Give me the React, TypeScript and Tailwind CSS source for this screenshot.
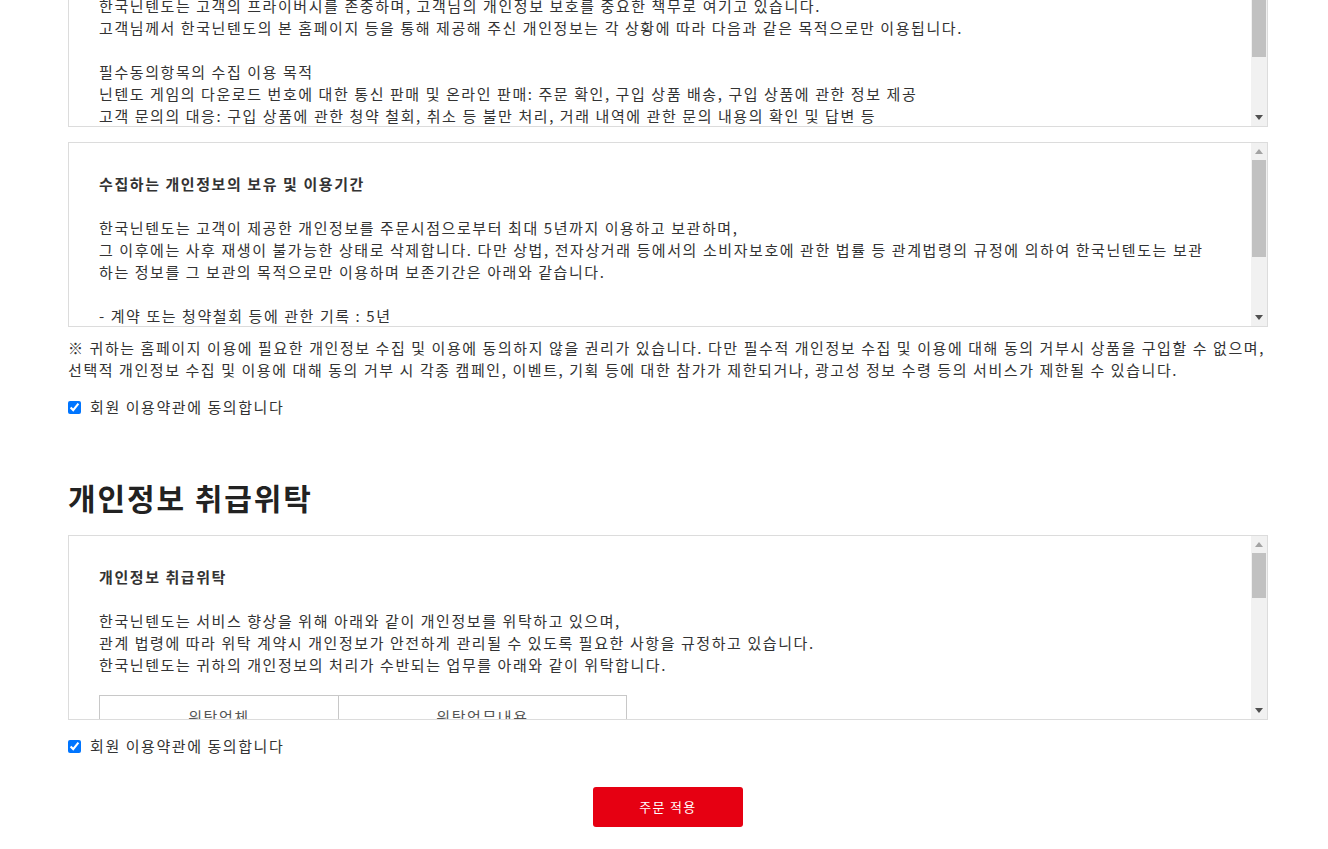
import React from "react";

const font = {
  fontFamily: '"Noto Sans CJK KR", "Noto Sans", sans-serif',
};

// fake classic scrollbar, since the box is a fixed-height scroll area
function ScrollRail({ thumb }: { thumb: number }) {
  return (
    <div className="flex w-[16px] shrink-0 flex-col bg-[#f1f1f1]">
      <div className="flex h-[17px] items-center justify-center">
        <svg width="8" height="5" viewBox="0 0 8 5">
          <path d="M4 0 L8 5 L0 5 Z" fill="#a3a3a3" />
        </svg>
      </div>
      <div className="flex-1 px-[1px]">
        <div className="w-full bg-[#c1c1c1]" style={{ height: thumb }} />
      </div>
      <div className="flex h-[17px] items-center justify-center">
        <svg width="8" height="5" viewBox="0 0 8 5">
          <path d="M0 0 L8 0 L4 5 Z" fill="#505050" />
        </svg>
      </div>
    </div>
  );
}

function TermsBox({ children, thumb }: { children: React.ReactNode; thumb: number }) {
  return (
    <div className="flex h-[185px] border border-[#dcdcdc] bg-white">
      <div className="flex-1 overflow-hidden pl-[30px] pr-[30px] pt-[30px] text-[15px] leading-[22px] tracking-[0.105em] text-[#333]">
        {children}
      </div>
      <ScrollRail thumb={thumb} />
    </div>
  );
}

function AgreeCheck() {
  return (
    <label className="flex items-center text-[15px] leading-[22px] tracking-[0.105em] text-[#333]">
      <input type="checkbox" defaultChecked className="m-0 mr-[9px] h-[13px] w-[13px]" />
      회원 이용약관에 동의합니다
    </label>
  );
}

const consignees = [
  ["(주)KG이니시스", "신용카드 결제 및 결제 대행 서비스"],
  ["(주)토스페이먼츠", "전자결제 대행 서비스"],
  ["CJ대한통운(주)", "구입 상품의 배송"],
  ["(주)트랜스코스모스코리아", "고객 상담 및 문의 응대"],
  ["(주)카카오", "알림톡 발송"],
];

export default function App() {
  return (
    <div className="min-h-screen overflow-hidden bg-white" style={font}>
      <div className="ml-[68px] w-[1200px] pb-[40px]">
        <div className="-mt-[58px]">
          <TermsBox thumb={97}>
            <p className="font-bold">개인정보 수집 및 이용 목적</p>
            <p>한국닌텐도는 고객의 프라이버시를 존중하며, 고객님의 개인정보 보호를 중요한 책무로 여기고 있습니다.</p>
            <p>고객님께서 한국닌텐도의 본 홈페이지 등을 통해 제공해 주신 개인정보는 각 상황에 따라 다음과 같은 목적으로만 이용됩니다.</p>
            <p>&nbsp;</p>
            <p>필수동의항목의 수집 이용 목적</p>
            <p>닌텐도 게임의 다운로드 번호에 대한 통신 판매 및 온라인 판매: 주문 확인, 구입 상품 배송, 구입 상품에 관한 정보 제공</p>
            <p>고객 문의의 대응: 구입 상품에 관한 청약 철회, 취소 등 불만 처리, 거래 내역에 관한 문의 내용의 확인 및 답변 등</p>
          </TermsBox>
        </div>

        <div className="mt-[15px]">
          <TermsBox thumb={97}>
            <p className="font-bold">수집하는 개인정보의 보유 및 이용기간</p>
            <p>&nbsp;</p>
            <p className="whitespace-nowrap">
              한국닌텐도는 고객이 제공한 개인정보를 주문시점으로부터 최대 5년까지 이용하고 보관하며,
              <br />
              그 이후에는 사후 재생이 불가능한 상태로 삭제합니다. 다만 상법, 전자상거래 등에서의 소비자보호에 관한 법률 등 관계법령의 규정에 의하여 한국닌텐도는 보관
              <br />
              하는 정보를 그 보관의 목적으로만 이용하며 보존기간은 아래와 같습니다.
            </p>
            <p>&nbsp;</p>
            <p>- 계약 또는 청약철회 등에 관한 기록 : 5년</p>
          </TermsBox>
        </div>

        <p className="mt-[10px] whitespace-nowrap text-[15px] leading-[22px] tracking-[0.105em] text-[#333]">
          ※ 귀하는 홈페이지 이용에 필요한 개인정보 수집 및 이용에 동의하지 않을 권리가 있습니다. 다만 필수적 개인정보 수집 및 이용에 대해 동의 거부시 상품을 구입할 수 없으며,
          <br />
          선택적 개인정보 수집 및 이용에 대해 동의 거부 시 각종 캠페인, 이벤트, 기획 등에 대한 참가가 제한되거나, 광고성 정보 수령 등의 서비스가 제한될 수 있습니다.
        </p>

        <div className="mt-[15px]">
          <AgreeCheck />
        </div>

        <h2 className="mt-[61px] text-[30px] font-bold leading-[36px] tracking-[1.9px] text-[#222]">개인정보 취급위탁</h2>

        <div className="mt-[20px]">
          <TermsBox thumb={45}>
            <p className="font-bold">개인정보 취급위탁</p>
            <p>&nbsp;</p>
            <p>한국닌텐도는 서비스 향상을 위해 아래와 같이 개인정보를 위탁하고 있으며,</p>
            <p>관계 법령에 따라 위탁 계약시 개인정보가 안전하게 관리될 수 있도록 필요한 사항을 규정하고 있습니다.</p>
            <p>한국닌텐도는 귀하의 개인정보의 처리가 수반되는 업무를 아래와 같이 위탁합니다.</p>
            <table className="mt-[19px] border-collapse text-center text-[#555]">
              <thead>
                <tr>
                  <th className="w-[239px] border border-[#c8c8c8] py-[10px] font-normal">위탁업체</th>
                  <th className="w-[288px] border border-[#c8c8c8] py-[10px] font-normal">위탁업무내용</th>
                </tr>
              </thead>
              <tbody>
                {consignees.map(([name, work]) => (
                  <tr key={name}>
                    <td className="border border-[#c8c8c8] py-[10px]">{name}</td>
                    <td className="border border-[#c8c8c8] py-[10px]">{work}</td>
                  </tr>
                ))}
              </tbody>
            </table>
          </TermsBox>
        </div>

        <div className="mt-[15px]">
          <AgreeCheck />
        </div>

        <div className="mt-[30px] flex justify-center">
          <button className="h-[40px] w-[150px] rounded-[3px] bg-[#e60012] text-[13px] tracking-[0.1em] text-white">
            주문 적용
          </button>
        </div>
      </div>
    </div>
  );
}
